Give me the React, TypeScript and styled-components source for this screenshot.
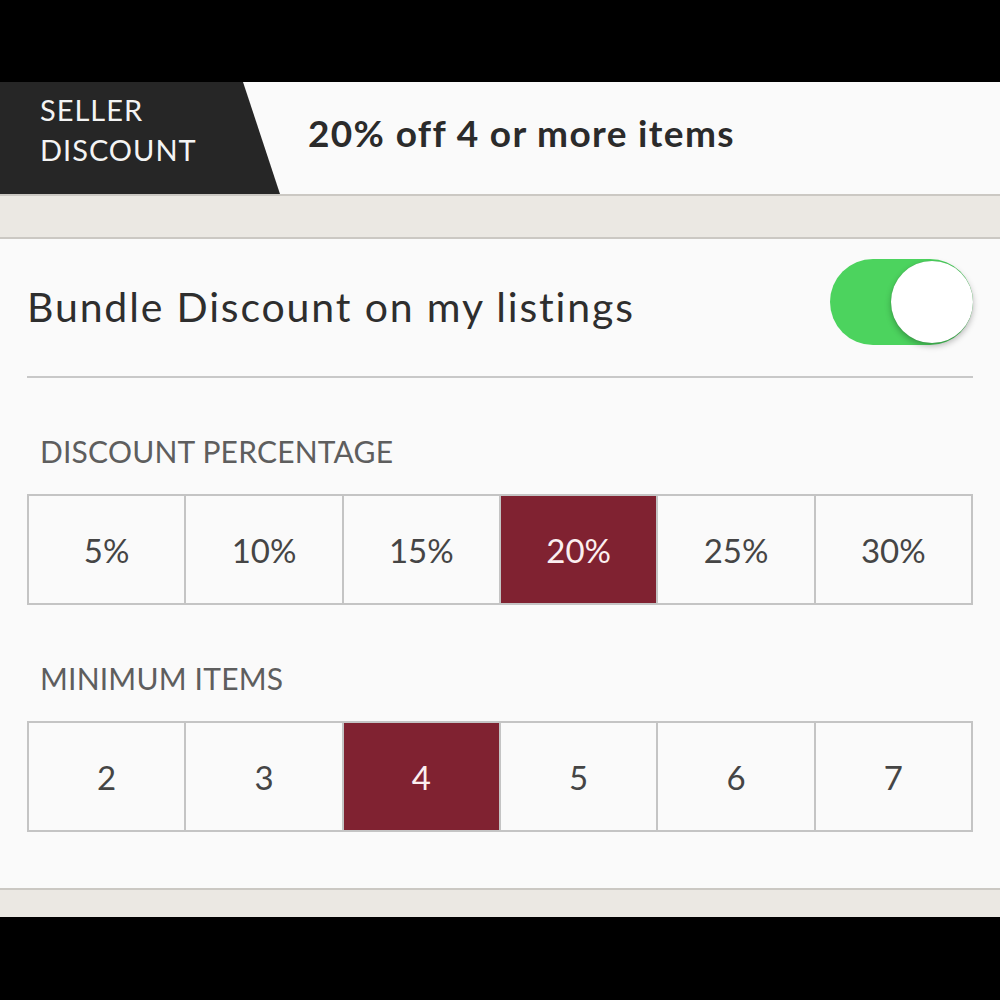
import React from 'react';
import styled, { createGlobalStyle } from 'styled-components';

const GlobalStyle = createGlobalStyle`
  html, body {
    margin: 0;
    padding: 0;
    background: #000;
  }
  * {
    box-sizing: border-box;
  }
`;

const Page = styled.div`
  width: 1000px;
  height: 1000px;
  padding-top: 82px;
  background: #000;
  display: flex;
  flex-direction: column;
  font-family: Lato, 'Open Sans', sans-serif;
`;

const Header = styled.div`
  height: 114px;
  display: flex;
  align-items: center;
  background: #fafafa;
  border-bottom: 2px solid #cbc8c3;
`;

const Label = styled.div`
  width: 280px;
  height: 100%;
  padding: 8px 0 0 40px;
  background: #262626;
  clip-path: polygon(0 0, 243px 0, 280px 100%, 0 100%);
  color: #f4f4f4;
  font-size: 29px;
  line-height: 40px;
  letter-spacing: 1px;
`;

const Headline = styled.div`
  margin-left: 28px;
  margin-top: -12px;
  font-size: 37px;
  font-weight: 700;
  letter-spacing: 1.35px;
  color: #2b2b2b;
`;

const Strip = styled.div<{ h: number; top?: boolean }>`
  height: ${(p) => p.h}px;
  background: #ebe8e3;
  ${(p) => (p.top ? 'border-top' : 'border-bottom')}: 2px solid #cbc8c3;
`;

const Panel = styled.div`
  height: 649px;
  background: #fafafa;
  padding: 0 27px;
`;

const ToggleRow = styled.div`
  height: 139px;
  display: flex;
  align-items: center;
  justify-content: space-between;
  border-bottom: 2px solid #c8c8c8;
`;

const RowTitle = styled.div`
  font-size: 41px;
  letter-spacing: 1.85px;
  color: #2e2e2e;
  margin-bottom: 2px;
`;

const Track = styled.div`
  position: relative;
  width: 143px;
  height: 86px;
  margin-bottom: 12px;
  border-radius: 43px;
  background: #4cd35e;
`;

const Knob = styled.div`
  position: absolute;
  top: 2px;
  right: 0;
  width: 82px;
  height: 82px;
  border-radius: 50%;
  background: #fff;
  box-shadow: 0 3px 6px rgba(0, 0, 0, 0.28), 0 0 1px rgba(0, 0, 0, 0.2);
`;

const SectionLabel = styled.div<{ mt: number }>`
  margin: ${(p) => p.mt}px 0 0 13px;
  height: 43px;
  line-height: 43px;
  font-size: 30px;
  letter-spacing: 0.2px;
  color: #5e5e5e;
`;

const Segmented = styled.div`
  margin-top: 21px;
  display: grid;
  grid-template-columns: repeat(6, 1fr);
  height: 111px;
  border: 2px solid #c4c4c4;
  border-right: none;
`;

const Cell = styled.div<{ active?: boolean }>`
  display: flex;
  align-items: center;
  justify-content: center;
  border-right: 2px solid #c4c4c4;
  background: ${(p) => (p.active ? '#802231' : 'transparent')};
  color: ${(p) => (p.active ? '#fbeff0' : '#454545')};
  font-size: 33px;
`;

const percents = ['5%', '10%', '15%', '20%', '25%', '30%'];
const items = ['2', '3', '4', '5', '6', '7'];

export default function App() {
  return (
    <>
      <GlobalStyle />
      <Page>
        <Header>
          <Label>
            SELLER
            <br />
            DISCOUNT
          </Label>
          <Headline>20% off 4 or more items</Headline>
        </Header>
        <Strip h={43} />
        <Panel>
          <ToggleRow>
            <RowTitle>Bundle Discount on my listings</RowTitle>
            <Track>
              <Knob />
            </Track>
          </ToggleRow>
          <SectionLabel mt={52}>DISCOUNT PERCENTAGE</SectionLabel>
          <Segmented>
            {percents.map((p) => (
              <Cell key={p} active={p === '20%'}>
                {p}
              </Cell>
            ))}
          </Segmented>
          <SectionLabel mt={52}>MINIMUM ITEMS</SectionLabel>
          <Segmented>
            {items.map((n) => (
              <Cell key={n} active={n === '4'}>
                {n}
              </Cell>
            ))}
          </Segmented>
        </Panel>
        <Strip h={29} top />
      </Page>
    </>
  );
}
